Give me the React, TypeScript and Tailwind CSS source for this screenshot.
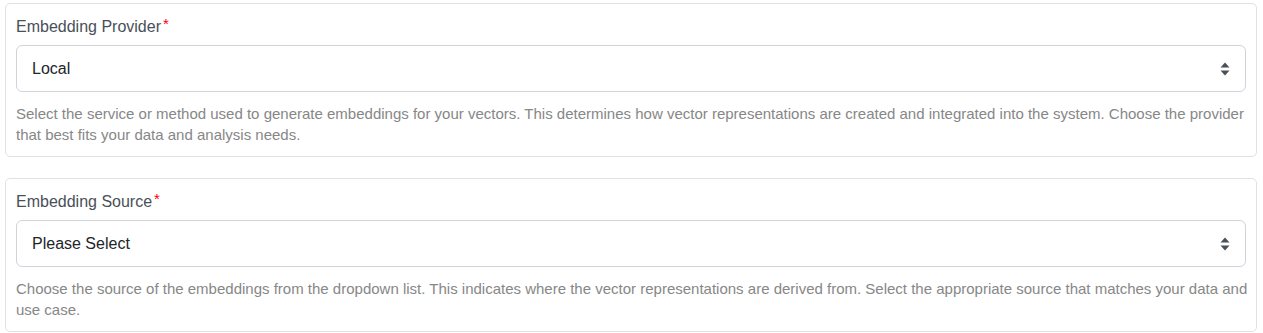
import React from 'react';

const SortIcon: React.FC = () => (
    <svg width="10" height="14" viewBox="0 0 10 14" className="text-[#495057]" fill="currentColor">
        <path d="M5 0.5 L9.5 5.5 H0.5 Z" />
        <path d="M0.5 8.5 H9.5 L5 13.5 Z" />
    </svg>
);

const SelectField: React.FC<{ label: string, value: string, help: string }> = ({ label, value, help }) => (
    <div className="border border-[#dee2e6] rounded-[5px] bg-white px-[10px] pt-[11px] pb-[11px]">
        <label className="flex items-start text-[16px] leading-[24px] text-[#495057]">
            {label}
            <span className="text-[#ff0000] text-[15px] leading-[18px] ml-[2px]">*</span>
        </label>
        <div className="mt-[6px] h-[47px] border border-[#ced4da] rounded-[6px] flex items-center justify-between pl-[15px] pr-[15px]">
            <span className="text-[16px] text-[#212529]">{value}</span>
            <SortIcon />
        </div>
        <p className="mt-[11px] mr-[-6px] text-[15px] leading-[21px] text-[#878787]">{help}</p>
    </div>
);

const App: React.FC = () => (
    <div className="bg-white pt-[3px] pl-[5px] pr-[6px] flex flex-col gap-[21px]" style={{ fontFamily: '"Liberation Sans", Arial, sans-serif' }}>
        <SelectField
            label="Embedding Provider"
            value="Local"
            help="Select the service or method used to generate embeddings for your vectors. This determines how vector representations are created and integrated into the system. Choose the provider that best fits your data and analysis needs."
        />
        <SelectField
            label="Embedding Source"
            value="Please Select"
            help="Choose the source of the embeddings from the dropdown list. This indicates where the vector representations are derived from. Select the appropriate source that matches your data and use case."
        />
    </div>
);

export default App;
